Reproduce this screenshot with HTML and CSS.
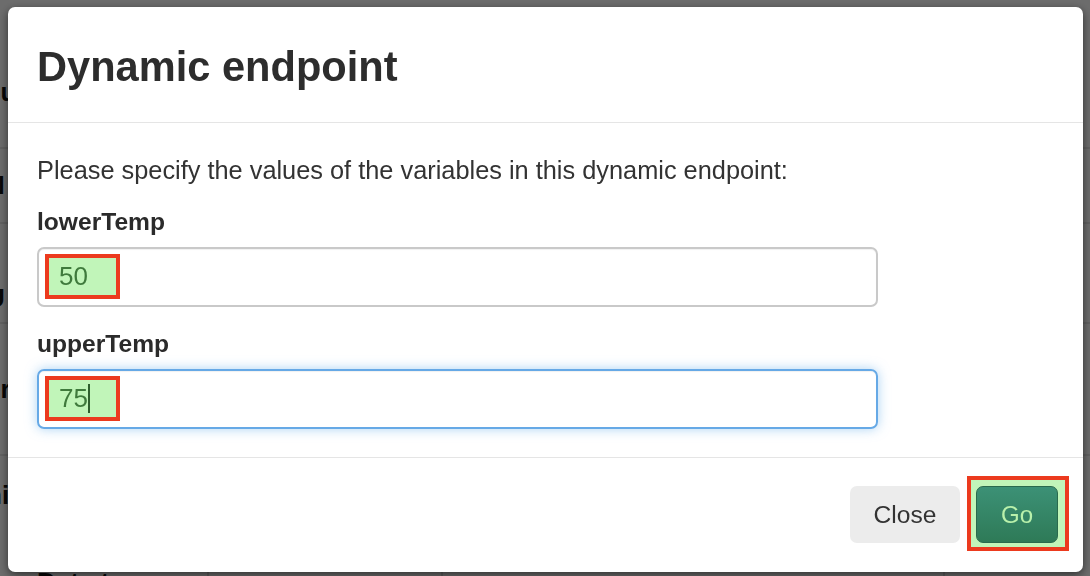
FILE: index.html
```html
<!DOCTYPE html>
<html>
<head>
<meta charset="utf-8">
<link rel="stylesheet" href="styles.css">
</head>
<body>
<div class="page">
  <div class="bg-row r1"><span class="bg-text">Ju</span></div>
  <div class="bg-row r2"><span class="bg-text">N</span></div>
  <div class="bg-row r3"><span class="bg-text">U</span></div>
  <div class="bg-row r4"><span class="bg-text">er</span></div>
  <div class="bg-row r5"><span class="bg-text">ni</span></div>
  <div class="bg-foot">
    <span class="bg-cell c1">Data types</span>
    <span class="bg-cell c2"></span>
    <span class="bg-cell c3"></span>
  </div>
</div>
<div class="backdrop"></div>
<div class="modal">
  <div class="modal-header">
    <h1 class="modal-title">Dynamic endpoint</h1>
  </div>
  <div class="modal-body">
    <p class="intro">Please specify the values of the variables in this dynamic endpoint:</p>
    <div class="group">
      <label class="label">lowerTemp</label>
      <div class="field">
        <span class="hl">50</span>
      </div>
    </div>
    <div class="group">
      <label class="label">upperTemp</label>
      <div class="field focus">
        <span class="hl">75<span class="caret"></span></span>
      </div>
    </div>
  </div>
  <div class="modal-footer">
    <button class="btn btn-close">Close</button>
    <span class="go-wrap"><button class="btn btn-go">Go</button></span>
  </div>
</div>
</body>
</html>
```
FILE: styles.css
```css
html, body {
  margin: 0;
  padding: 0;
}
body {
  width: 1090px;
  height: 576px;
  overflow: hidden;
  background: #ffffff;
  font-family: "Liberation Sans", Arial, Helvetica, sans-serif;
  color: #333;
}
.page {
  position: relative;
  height: 576px;
  overflow: hidden;
}
.bg-row {
  box-sizing: border-box;
  border-bottom: 2px solid #e6e6e6;
  display: flex;
  align-items: flex-start;
  font-weight: bold;
  font-size: 26px;
  line-height: 30px;
  color: #111;
}
.bg-text {
  margin-left: -14px;
}
.r1 { height: 149px; padding-top: 77px; }
.r2 { height: 75px; padding-top: 21px; }
.r3 { height: 100px; padding-top: 59px; }
.r4 { height: 132px; padding-top: 50px; }
.r5 { height: 113px; padding-top: 24px; border-bottom: none; }
.bg-foot {
  display: flex;
  font-weight: bold;
  font-size: 26px;
  line-height: 26px;
  color: #111;
}
.bg-cell {
  height: 40px;
}
.c1 { width: 170px; padding-left: 37px; border-right: 2px solid #ddd; }
.c2 { width: 232px; border-right: 2px solid #ddd; }
.c3 { width: 500px; border-right: 2px solid #ddd; }

.backdrop {
  position: fixed;
  inset: 0;
  background: rgba(0, 0, 0, 0.575);
}

.modal {
  position: fixed;
  left: 8px;
  top: 7px;
  width: 1075px;
  background: #fff;
  border-radius: 7px;
  box-shadow: 0 3px 10px rgba(0, 0, 0, 0.55);
  display: flex;
  flex-direction: column;
}
.modal-header {
  padding: 37.4px 29px 31.6px;
  border-bottom: 1.5px solid #e5e5e5;
}
.modal-title {
  margin: 0;
  font-size: 41.6px;
  line-height: 46px;
  font-weight: bold;
  color: #2d2d2d;
}
.modal-body {
  padding: 29.4px 29px 28px;
}
.intro {
  margin: 0 0 15.9px;
  font-size: 25.35px;
  line-height: 36px;
  color: #333;
}
.group + .group {
  margin-top: 19.5px;
}
.label {
  display: block;
  font-weight: bold;
  font-size: 24.6px;
  line-height: 36px;
  margin-bottom: 6.5px;
  color: #2b2b2b;
}
.field {
  box-sizing: border-box;
  width: 841px;
  height: 60px;
  border: 2px solid #c9c9c9;
  border-radius: 7px;
  display: flex;
  align-items: center;
  padding-left: 6px;
  box-shadow: inset 0 1px 1px rgba(0, 0, 0, 0.06);
}
.field.focus {
  border-color: #66a9e6;
  box-shadow: inset 0 1px 1px rgba(0, 0, 0, 0.06), 0 0 12px rgba(102, 175, 233, 0.55);
}
.hl {
  box-sizing: border-box;
  width: 75px;
  height: 45px;
  border: 4px solid #ec3a1e;
  background: #c1f5b9;
  padding-left: 10px;
  font-size: 26px;
  line-height: 37px;
  color: #3f7a3c;
}
.caret {
  display: inline-block;
  width: 1.6px;
  height: 29px;
  background: #2f5f2e;
  vertical-align: -5.5px;
}
.modal-footer {
  border-top: 1.5px solid #e5e5e5;
  padding: 28.5px 25px 29px;
  display: flex;
  justify-content: flex-end;
  align-items: center;
  gap: 16px;
}
.btn {
  font-family: "Liberation Sans", Arial, Helvetica, sans-serif;
  font-size: 24.6px;
  border-radius: 7px;
  cursor: pointer;
  padding: 0;
}
.btn-close {
  width: 110px;
  height: 57px;
  background: #ececec;
  border: none;
  color: #333;
}
.go-wrap {
  position: relative;
  display: inline-block;
  isolation: isolate;
}
.go-wrap::before {
  content: "";
  position: absolute;
  top: -10px;
  left: -9px;
  right: -11px;
  bottom: -8px;
  border: 4px solid #ec3a1e;
  background: #c1f5b9;
  z-index: -1;
}
.btn-go {
  display: block;
  width: 82px;
  height: 57px;
  background: linear-gradient(#3c9176, #2e7a57);
  border: 1.5px solid #2a6a4d;
  color: #b9f1ab;
  font-size: 24px;
}
```
